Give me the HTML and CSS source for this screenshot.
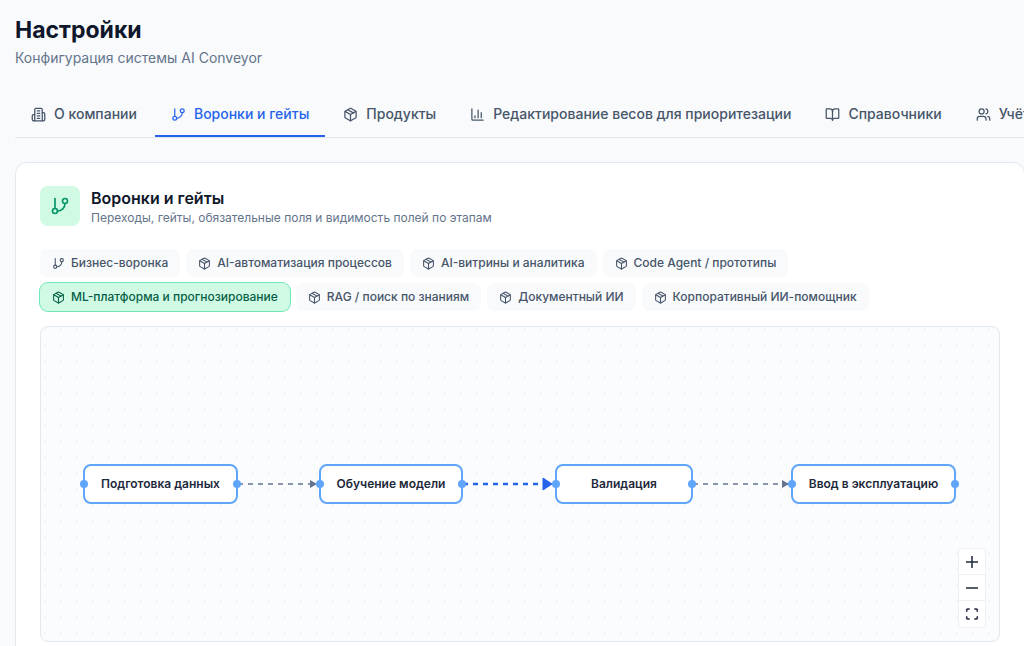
FILE: index.html
```html
<!DOCTYPE html>
<html lang="ru">
<head>
<meta charset="utf-8">
<meta name="viewport" content="width=device-width, initial-scale=1">
<title>Настройки</title>
<link rel="stylesheet" href="styles.css">
</head>
<body>
<svg class="sprite" aria-hidden="true">
  <symbol id="branch" viewBox="0 0 24 24"><path d="M6 3v12"/><circle cx="18" cy="6" r="3"/><circle cx="6" cy="18" r="3"/><path d="M18 9a9 9 0 0 1-9 9"/></symbol>
  <symbol id="box" viewBox="0 0 24 24"><path d="M11 21.73a2 2 0 0 0 2 0l7-4A2 2 0 0 0 21 16V8a2 2 0 0 0-1-1.73l-7-4a2 2 0 0 0-2 0l-7 4A2 2 0 0 0 3 8v8a2 2 0 0 0 1 1.73z"/><path d="M12 22V12"/><path d="m3.3 7 8.7 5 8.7-5"/><path d="m7.5 4.27 9 5.15"/></symbol>
  <symbol id="building" viewBox="0 0 24 24"><path d="M6 22V4a2 2 0 0 1 2-2h8a2 2 0 0 1 2 2v18Z"/><path d="M6 12H4a2 2 0 0 0-2 2v6a2 2 0 0 0 2 2h2"/><path d="M18 9h2a2 2 0 0 1 2 2v9a2 2 0 0 1-2 2h-2"/><path d="M10 6h4M10 10h4M10 14h4M10 18h4"/></symbol>
  <symbol id="chart" viewBox="0 0 24 24"><path d="M3 3v16a2 2 0 0 0 2 2h16"/><path d="M18 17V9M13 17V5M8 17v-3"/></symbol>
  <symbol id="book" viewBox="0 0 24 24"><path d="M12 7v14"/><path d="M3 18a1 1 0 0 1-1-1V4a1 1 0 0 1 1-1h5a4 4 0 0 1 4 4 4 4 0 0 1 4-4h5a1 1 0 0 1 1 1v13a1 1 0 0 1-1 1h-6a3 3 0 0 0-3 3 3 3 0 0 0-3-3z"/></symbol>
  <symbol id="users" viewBox="0 0 24 24"><path d="M16 21v-2a4 4 0 0 0-4-4H6a4 4 0 0 0-4 4v2"/><circle cx="9" cy="7" r="4"/><path d="M22 21v-2a4 4 0 0 0-3-3.87"/><path d="M16 3.13a4 4 0 0 1 0 7.75"/></symbol>
</svg>
<main class="page">
  <header class="page-header">
    <h1 class="page-title">Настройки</h1>
    <p class="page-subtitle">Конфигурация системы AI Conveyor</p>
  </header>
  <nav class="tabs" aria-label="Разделы настроек">
    <button class="tab" type="button"><svg class="icon"><use href="#building"/></svg>О компании</button>
    <button class="tab tab-active" type="button" aria-current="page"><svg class="icon"><use href="#branch"/></svg>Воронки и гейты</button>
    <button class="tab" type="button"><svg class="icon"><use href="#box"/></svg>Продукты</button>
    <button class="tab" type="button"><svg class="icon"><use href="#chart"/></svg>Редактирование весов для приоритезации</button>
    <button class="tab" type="button"><svg class="icon"><use href="#book"/></svg>Справочники</button>
    <button class="tab" type="button"><svg class="icon"><use href="#users"/></svg>Учёт</button>
  </nav>
  <section class="card">
    <div class="card-header">
      <span class="card-badge"><svg class="icon icon-large"><use href="#branch"/></svg></span>
      <div>
        <h2 class="card-title">Воронки и гейты</h2>
        <p class="card-subtitle">Переходы, гейты, обязательные поля и видимость полей по этапам</p>
      </div>
    </div>
    <div class="chips">
      <button class="chip" type="button"><svg class="icon icon-small"><use href="#branch"/></svg>Бизнес-воронка</button>
      <button class="chip" type="button"><svg class="icon icon-small"><use href="#box"/></svg>AI-автоматизация процессов</button>
      <button class="chip" type="button"><svg class="icon icon-small"><use href="#box"/></svg>AI-витрины и аналитика</button>
      <button class="chip" type="button"><svg class="icon icon-small"><use href="#box"/></svg>Code Agent / прототипы</button>
      <button class="chip chip-active" type="button" aria-pressed="true"><svg class="icon icon-small"><use href="#box"/></svg>ML-платформа и прогнозирование</button>
      <button class="chip" type="button"><svg class="icon icon-small"><use href="#box"/></svg>RAG / поиск по знаниям</button>
      <button class="chip" type="button"><svg class="icon icon-small"><use href="#box"/></svg>Документный ИИ</button>
      <button class="chip" type="button"><svg class="icon icon-small"><use href="#box"/></svg>Корпоративный ИИ-помощник</button>
    </div>
    <div class="flow">
      <svg class="edges" aria-hidden="true">
        <path class="edge" d="M197 157H279"/><path class="arrow" d="M269 153l7 4-7 4z"/>
        <path class="edge edge-main" d="M422 157H503"/><path class="arrow arrow-main" d="M502 151l9 6-9 6z"/>
        <path class="edge" d="M652 157H750"/><path class="arrow" d="M741 153l7 4-7 4z"/>
      </svg>
      <div class="node node-prepare">Подготовка данных</div>
      <div class="node node-train">Обучение модели</div>
      <div class="node node-validate">Валидация</div>
      <div class="node node-launch">Ввод в эксплуатацию</div>
      <div class="controls">
        <button class="control" type="button" aria-label="Приблизить"><svg class="control-icon" viewBox="0 0 12 12"><path d="M6 0v12M0 6h12"/></svg></button>
        <button class="control" type="button" aria-label="Отдалить"><svg class="control-icon" viewBox="0 0 12 12"><path d="M0 6h12"/></svg></button>
        <button class="control" type="button" aria-label="Показать всё"><svg class="control-icon" viewBox="0 0 12 12"><path d="M.7 3.7V2.2Q.7.9 2 .9h1.7M8.3.9H10q1.3 0 1.3 1.3v1.5M11.3 8.3v1.5q0 1.300-1.300 1.300H8.3M3.7 11.100H2q-1.300 0-1.300-1.300V8.3"/></svg></button>
      </div>
    </div>
  </section>
</main>
</body>
</html>
```
FILE: styles.css
```css
* { box-sizing: border-box; }
body {
  margin: 0;
  background: #f8fafc;
  color: #0f172a;
  font-family: Inter, "Liberation Sans", sans-serif;
  overflow: hidden;
}
button { font: inherit; color: inherit; cursor: pointer; }
h1, h2, p { margin: 0; }
.sprite { display: none; }
.page { padding: 14px 0 0 15px; }
.page-title { font-size: 23px; line-height: 32px; font-weight: 700; }
.page-subtitle { margin-top: 2px; font-size: 14px; line-height: 20px; color: #64748b; }
.icon {
  width: 15px;
  height: 15px;
  flex: none;
  fill: none;
  stroke: currentColor;
  stroke-width: 2;
  stroke-linecap: round;
  stroke-linejoin: round;
}
.icon-large { width: 20px; height: 20px; }
.icon-small { width: 13px; height: 13px; }
.tabs {
  display: flex;
  gap: 2px;
  margin-top: 24px;
  border-bottom: 1px solid #e2e8f0;
  overflow: hidden;
}
.tab {
  display: flex;
  flex: none;
  align-items: center;
  gap: 8px;
  padding: 12px 16px 11px;
  border: 0;
  border-bottom: 2px solid transparent;
  background: none;
  font-size: 14px;
  line-height: 20px;
  font-weight: 500;
  color: #475569;
  white-space: nowrap;
}
.tab-active { color: #2563eb; border-color: #2563eb; }
.card {
  margin: 24px -1px 0 0;
  padding: 23px 24px 32px;
  border: 1px solid #e2e8f0;
  border-radius: 12px;
  background: #fff;
}
.card-header { display: flex; align-items: center; gap: 11px; }
.card-badge {
  display: grid;
  place-items: center;
  width: 40px;
  height: 40px;
  border-radius: 8px;
  background: #d1fae5;
  color: #059669;
}
.card-title { font-size: 16px; line-height: 24px; font-weight: 600; }
.card-subtitle { font-size: 12px; line-height: 16px; color: #64748b; }
.chips { display: flex; flex-wrap: wrap; gap: 6px; margin-top: 23px; }
.chip {
  display: flex;
  align-items: center;
  gap: 6px;
  padding: 6px 12px;
  border: 0;
  border-radius: 8px;
  background: #f8fafc;
  font-size: 12px;
  line-height: 16px;
  font-weight: 500;
  color: #475569;
}
.chip-active { background: #d1fae5; color: #065f46; box-shadow: 0 0 0 1px #6ee7b7; }
.flow {
  position: relative;
  height: 316px;
  margin-top: 15px;
  border: 1px solid #e2e8f0;
  border-radius: 8px;
  background: #fafcfe radial-gradient(circle at 8px 8px, #f1f4f7 0 1px, transparent 1px) -4px -6px / 16px 16px;
}
.edges { position: absolute; inset: 0; width: 100%; height: 100%; }
.edge { fill: none; stroke: #64748b; stroke-width: 1.5; stroke-dasharray: 5 5; }
.edge-main { stroke: #2563eb; stroke-width: 2.5; }
.arrow { fill: #64748b; }
.arrow-main { fill: #2563eb; stroke: #2563eb; stroke-linejoin: round; }
.node {
  position: absolute;
  top: 137px;
  height: 40px;
  border: 2px solid #60a5fa;
  border-radius: 8px;
  background: #fff;
  font-size: 12px;
  line-height: 36px;
  font-weight: 600;
  color: #1e293b;
  text-align: center;
  white-space: nowrap;
}
.node::before, .node::after {
  content: "";
  position: absolute;
  top: 14px;
  width: 8px;
  height: 8px;
  border-radius: 50%;
  background: #60a5fa;
}
.node::before { left: -5px; }
.node::after { right: -5px; }
.node-prepare { left: 42px; width: 155px; }
.node-train { left: 278px; width: 144px; }
.node-validate { left: 514px; width: 138px; }
.node-launch { left: 750px; width: 165px; }
.controls {
  position: absolute;
  right: 13px;
  bottom: 13px;
  display: grid;
  border: 1px solid #eef0f3;
}
.control {
  display: grid;
  place-items: center;
  width: 26px;
  height: 26px;
  padding: 0;
  border: 0;
  border-bottom: 1px solid #eef0f3;
  background: #fff;
}
.control:last-child { border-bottom: 0; }
.control-icon { width: 12px; height: 12px; fill: none; stroke: #1e293b; stroke-width: 1.5; }
```
